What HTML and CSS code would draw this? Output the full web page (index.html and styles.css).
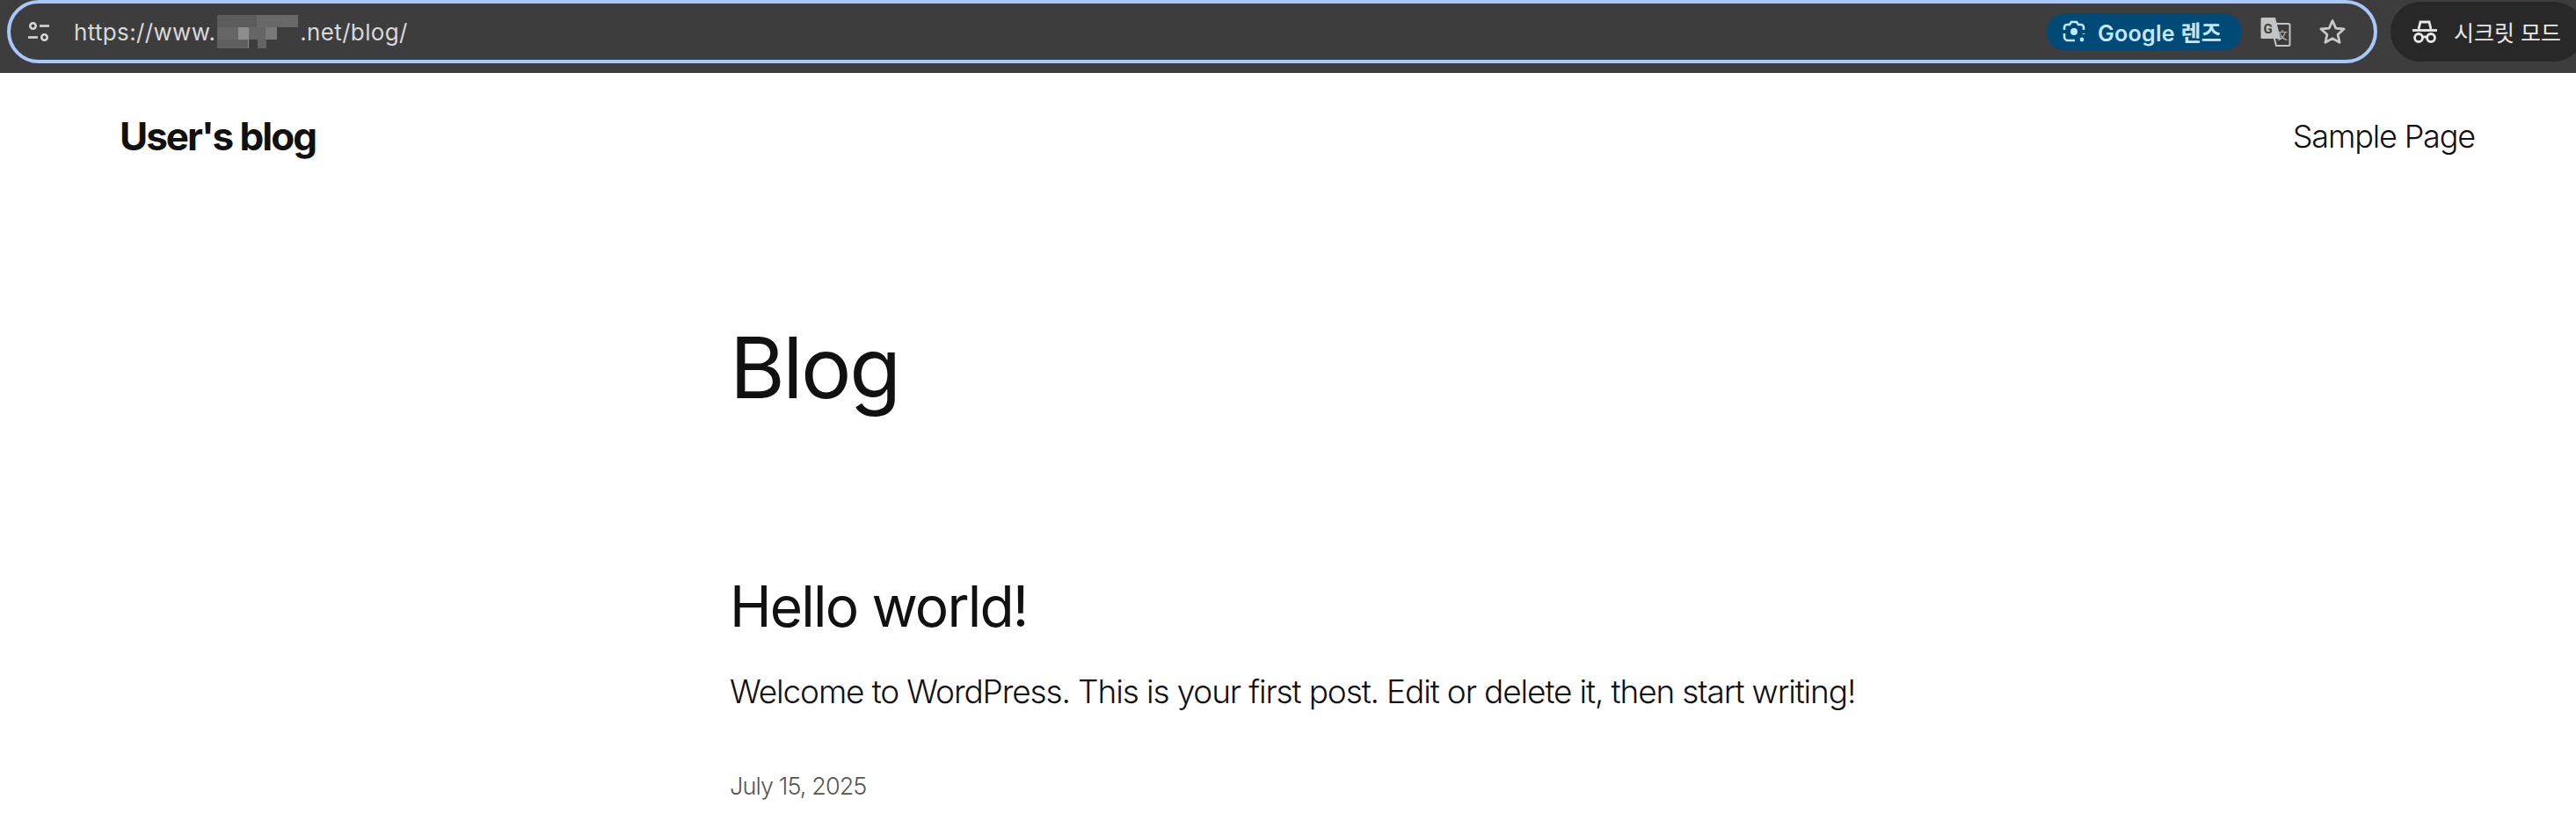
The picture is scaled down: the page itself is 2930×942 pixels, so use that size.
FILE: index.html
```html
<!DOCTYPE html>
<html lang="ko">
<head>
  <meta charset="UTF-8">
  <meta name="viewport" content="width=device-width, initial-scale=1">
  <title>Blog</title>
  <link rel="stylesheet" href="styles.css">
</head>
<body>
  <!-- Browser toolbar -->
  <div class="toolbar">
    <div class="omnibox">
      <svg class="tune-icon" width="24" height="22" viewBox="0 0 24 22" fill="none" stroke="#d6d6d6" stroke-width="2.6">
        <circle cx="5.500" cy="4.500" r="3.200"/>
        <path d="M13 4.500h11"/>
        <path d="M0 17.500h11"/>
        <circle cx="18.500" cy="17.500" r="3.200"/>
      </svg>
      <div class="url">https://www.<svg class="blur" width="92" height="38" viewBox="0 0 92 38"><rect x="0" y="0" width="92" height="14" fill="#5c5c5c"/><rect x="45" y="0" width="47" height="14" fill="#686868"/><rect x="0" y="14" width="68" height="14" fill="#666"/><rect x="24" y="14" width="12" height="24" fill="#8e8e8e"/><rect x="0" y="28" width="35" height="10" fill="#5f5f5f"/><rect x="46" y="28" width="10" height="10" fill="#636363"/><rect x="55" y="14" width="13" height="14" fill="#787878"/></svg>.net/blog/</div>
      <div class="lens-pill">
        <svg width="30" height="30" viewBox="0 0 30 30" fill="none" stroke="#c2e7ff" stroke-width="2.6">
          <path d="M4 13v-3a3 3 0 0 1 3-3h3l2-3h6l2 3h3a3 3 0 0 1 3 3v3"/>
          <path d="M4 17v4a4 4 0 0 0 4 4h8"/>
          <path d="M26 17v1"/>
          <circle cx="15" cy="15" r="4" fill="#c2e7ff" stroke="none"/>
          <circle cx="24" cy="24" r="2.400" fill="#c2e7ff" stroke="none"/>
        </svg>
        <span>Google 렌즈</span>
      </div>
      <svg class="translate-icon" width="36" height="36" viewBox="0 0 36 36">
        <path d="M16 9h17a1.500 1.500 0 0 1 1.500 1.500v22a1.500 1.500 0 0 1-1.500 1.500H19l-2-8" fill="#3c3c3c" stroke="#c4c4c4" stroke-width="2"/>
        <path d="M3 2h15l6 24H3a1.500 1.500 0 0 1-1.500-1.500v-21A1.500 1.500 0 0 1 3 2z" fill="#c4c4c4"/>
        <text x="4.500" y="20" class="translate-g">G</text>
        <text x="20" y="27" class="translate-x">文</text>
      </svg>
      <svg class="star-icon" width="32" height="32" viewBox="0 0 32 32" fill="none" stroke="#c8c8c8" stroke-width="2.800" stroke-linejoin="round">
        <path d="M16 3.500l3.800 8.600 9.300.900-7 6.200 2 9.200-8.100-4.800-8.100 4.800 2-9.200-7-6.200 9.300-.900z"/>
      </svg>
    </div>
    <div class="incognito">
      <svg width="30" height="28" viewBox="0 0 30 28" fill="none" stroke="#e8e8e8" stroke-width="2.800">
        <path d="M8 11l2-8h10l2 8"/>
        <path d="M1 12.500h28"/>
        <circle cx="8" cy="21" r="4.500"/>
        <circle cx="22" cy="21" r="4.500"/>
        <path d="M12.500 20h5"/>
      </svg>
      <span>시크릿 모드</span>
    </div>
  </div>

  <!-- Site header -->
  <header class="site-header">
    <a class="site-title">User's blog</a>
    <a class="site-nav">Sample Page</a>
  </header>

  <main class="content">
    <h1 class="page-title">Blog</h1>
    <article class="post">
      <h2 class="post-title">Hello world!</h2>
      <p class="post-excerpt">Welcome to WordPress. This is your first post. Edit or delete it, then start writing!</p>
      <div class="post-date">July 15, 2025</div>
    </article>
  </main>
</body>
</html>
```

FILE: styles.css
```css
html, body {
  margin: 0;
  padding: 0;
  height: 942px;
  overflow: hidden;
  background: #fff;
}
body {
  font-family: Inter, "Noto Sans", sans-serif;
  color: #111;
}

/* Toolbar */
.toolbar {
  display: flex;
  align-items: flex-start;
  height: 83px;
  padding-left: 8px;
  background: #3d3d3d;
  box-sizing: border-box;
}
.omnibox {
  display: flex;
  align-items: center;
  flex: none;
  width: 2696px;
  height: 72px;
  padding: 0 31px 0 20px;
  border: 4px solid #a8c7fa;
  border-radius: 36px;
  box-sizing: border-box;
  background: #3d3d3d;
}
.tune-icon {
  flex: none;
  margin-right: 28px;
}
.url {
  display: flex;
  align-items: center;
  flex: 1;
  font-size: 26px;
  letter-spacing: 0.35px;
  color: #d8d8d8;
}
.blur {
  margin: 0 2px;
}
.lens-pill {
  display: flex;
  align-items: center;
  gap: 12px;
  width: 222px;
  height: 43px;
  padding-left: 16px;
  margin-right: 20px;
  box-sizing: border-box;
  border-radius: 22px;
  background: #004a77;
  color: #c2e7ff;
  font-family: Inter, "Noto Sans CJK KR", sans-serif;
  font-size: 25px;
  font-weight: 600;
  letter-spacing: 0.3px;
  white-space: nowrap;
}
.translate-icon {
  flex: none;
  margin-right: 31px;
}
.translate-g {
  font-family: Roboto, sans-serif;
  font-size: 15px;
  font-weight: 700;
  fill: #3d3d3d;
}
.translate-x {
  font-family: "Noto Sans CJK SC", sans-serif;
  font-size: 12px;
  fill: #c4c4c4;
}
.star-icon {
  flex: none;
}
.incognito {
  display: flex;
  align-items: center;
  gap: 18px;
  flex: none;
  width: 220px;
  height: 68px;
  margin: 2px 0 0 15px;
  padding-left: 24px;
  box-sizing: border-box;
  border-radius: 34px;
  background: #282828;
  color: #e8e8e8;
  font-family: "Noto Sans CJK KR", sans-serif;
  font-size: 25px;
  white-space: nowrap;
}

/* Page */
.site-header {
  display: flex;
  justify-content: space-between;
  align-items: center;
  height: 144px;
  padding: 0 115px 0 136px;
}
.site-title {
  font-size: 44px;
  font-weight: 700;
  letter-spacing: -2px;
}
.site-nav {
  font-size: 36px;
  font-weight: 300;
  letter-spacing: -1.15px;
}
.content {
  padding: 0 0 0 830px;
}
.page-title {
  margin: 133px 0 0;
  font-size: 96px;
  line-height: 116px;
  font-weight: 400;
  letter-spacing: -2.5px;
}
.post {
  margin-top: 175px;
}
.post-title {
  margin: 0;
  font-size: 64px;
  line-height: 78px;
  font-weight: 400;
  letter-spacing: -1.8px;
}
.post-excerpt {
  margin: 33px 0 0;
  font-size: 37px;
  line-height: 50px;
  font-weight: 300;
  letter-spacing: -1.13px;
  white-space: nowrap;
}
.post-date {
  margin-top: 64px;
  font-size: 27px;
  line-height: 38px;
  font-weight: 300;
  letter-spacing: -0.9px;
  color: #555;
}
```
